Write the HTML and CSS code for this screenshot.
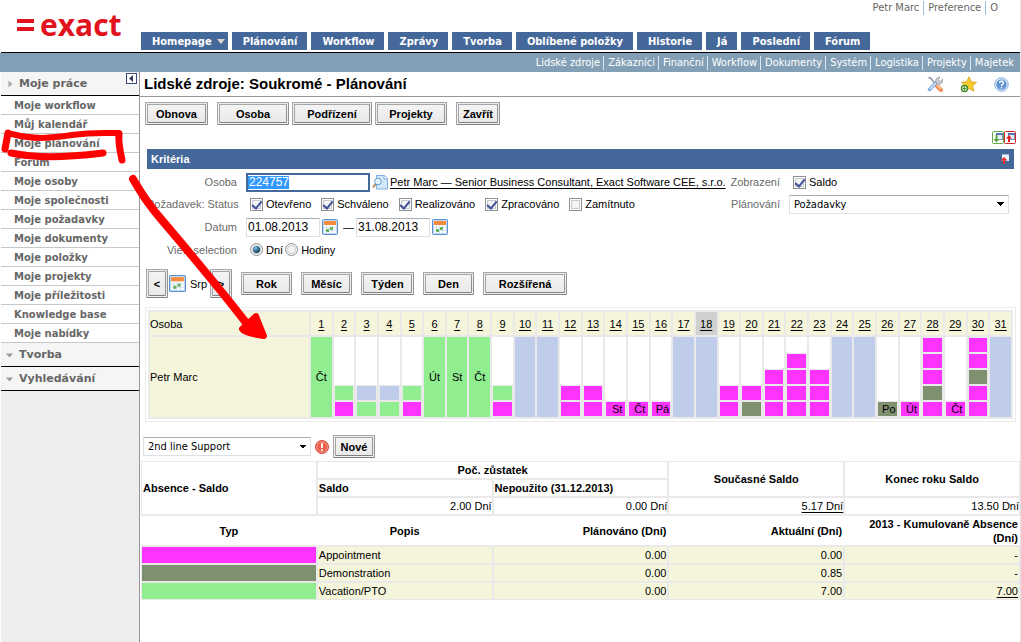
FILE: index.html
```
<!DOCTYPE html>
<html lang="cs">
<head>
<meta charset="utf-8">
<title>Lidské zdroje: Soukromé - Plánování</title>
<link rel="stylesheet" href="styles.css">
</head>
<body>
<svg class="defs" width="0" height="0" aria-hidden="true">
  <symbol id="cal" viewBox="0 0 16 16"><rect x=".5" y=".5" width="15" height="15" rx="1" fill="#c4daf4" stroke="#5b8fd0"/><rect x="2" y="2" width="12" height="12" fill="#fff"/><rect x="2" y="2" width="12" height="4" fill="#f58a3c"/><path d="M2 8.500h12M2 11.500h12M4.500 6v8M7.500 6v8M10.500 6v8" stroke="#d5e2f2"/><rect x="4" y="10" width="3" height="3" fill="#6ab460"/><rect x="8" y="8" width="3" height="3" fill="#6ab460"/></symbol>
  <symbol id="panel" viewBox="0 0 7 7"><rect x=".5" y=".5" width="6" height="6" fill="#e8f1fb" stroke="#7793c0"/><path d="M0 1h7" stroke="#5876b0" stroke-width="2"/></symbol>
</svg>

<header class="top">
  <a class="logo" href="#"><svg width="17" height="12" viewBox="0 0 17 12" aria-hidden="true"><path d="M0 0h17v4H0zM0 8h17v4H0z" fill="#e1141d"/></svg><span>exact</span></a>
  <div class="top-right">
    <nav class="user"><a href="#">Petr Marc</a><a href="#">Preference</a><a href="#">O</a></nav>
    <nav class="tabs">
      <a class="home" href="#">Homepage<svg width="8" height="5" viewBox="0 0 8 5" aria-hidden="true"><path d="M0 0h8L4 5z" fill="#ddd6cc"/></svg></a><a href="#">Plánování</a><a href="#">Workflow</a><a href="#">Zprávy</a><a href="#">Tvorba</a><a href="#">Oblíbené položky</a><a href="#">Historie</a><a href="#">Já</a><a href="#">Poslední</a><a href="#">Fórum</a>
    </nav>
  </div>
</header>
<nav class="sub"><a href="#">Lidské zdroje</a><a href="#">Zákazníci</a><a href="#">Finanční</a><a href="#">Workflow</a><a href="#">Dokumenty</a><a href="#">Systém</a><a href="#">Logistika</a><a href="#">Projekty</a><a href="#">Majetek</a></nav>

<div class="layout">
  <aside class="side">
    <h2><svg width="5" height="8" viewBox="0 0 5 8" aria-hidden="true"><path d="M.5.5v7L4.500 4z" fill="#aaa"/></svg>Moje práce
      <button class="collapse" aria-label="Skrýt menu"><svg width="11" height="11" viewBox="0 0 11 11"><rect x=".5" y=".5" width="10" height="10" fill="#fff" stroke="#3c4a80"/><path d="M7 2v7L3 5.500z" fill="#333b60"/></svg></button></h2>
    <ul>
      <li><a href="#">Moje workflow</a></li><li><a href="#">Můj kalendář</a></li><li><a href="#">Moje plánování</a></li><li><a href="#">Fórum</a></li><li><a href="#">Moje osoby</a></li><li><a href="#">Moje společnosti</a></li><li><a href="#">Moje požadavky</a></li><li><a href="#">Moje dokumenty</a></li><li><a href="#">Moje položky</a></li><li><a href="#">Moje projekty</a></li><li><a href="#">Moje příležitosti</a></li><li><a href="#">Knowledge base</a></li><li><a href="#">Moje nabídky</a></li>
    </ul>
    <h2 class="closed"><svg width="8" height="5" viewBox="0 0 8 5" aria-hidden="true"><path d="M0 .5h7L3.500 4.500z" fill="#999"/></svg>Tvorba</h2>
    <h2 class="closed"><svg width="8" height="5" viewBox="0 0 8 5" aria-hidden="true"><path d="M0 .5h7L3.500 4.500z" fill="#999"/></svg>Vyhledávání</h2>
  </aside>

  <main>
    <div class="title">
      <h1>Lidské zdroje: Soukromé - Plánování</h1>
      <a href="#" aria-label="Nastavení"><svg width="16" height="16" viewBox="0 0 16 16"><path d="M1.500 1.500l2 .5 5 6" stroke="#8a97a8" stroke-width="1.500" fill="none"/><path d="M9 9l5 5" stroke="#f08c52" stroke-width="4" stroke-linecap="round"/><path d="M9.500 8.500l4.500 4.500" stroke="#ffc9a0" stroke-width="1.500"/><path d="M2.500 13.500L10 6" stroke="#85aee2" stroke-width="3.500" stroke-linecap="round"/><path d="M3 13L9 7" stroke="#cce3fa" stroke-width="1.500"/><path d="M9 6.500a4 4 0 0 1 4-5.500l-1.500 2.500 1 1.500 1.500.5L15.500 3a4 4 0 0 1-5.500 5z" fill="#c9ced3" stroke="#8c949c" stroke-width=".7"/></svg></a>
      <a href="#" aria-label="Přidat k oblíbeným"><svg width="17" height="17" viewBox="0 0 17 17"><path d="M9 .8l2.300 5 5.200.5-3.900 3.600 1.200 5.400L9 12.500l-4.800 2.800 1.200-5.400L1.500 6.300l5.200-.5z" fill="#f8cc2c" stroke="#d99d18" stroke-width=".8"/><circle cx="4.500" cy="12.500" r="3" fill="#fff" stroke="#3f8a25" stroke-width="1.400"/><path d="M2.700 12.500h3.600M4.500 10.700v3.600" stroke="#3f8a25" stroke-width="1.200"/></svg></a>
      <a href="#" aria-label="Nápověda"><svg width="15" height="15" viewBox="0 0 15 15"><circle cx="7.500" cy="7.500" r="6.800" fill="#e3eefb" stroke="#86aede"/><circle cx="7.500" cy="7.500" r="5.200" fill="#5f93d4"/><path d="M5.600 6a1.900 1.900 0 1 1 2.700 1.700c-.6.3-.8.6-.8 1.200M7.500 10v1.500" fill="none" stroke="#fff" stroke-width="1.400"/></svg></a>
    </div>

    <div class="actions"><button class="btn w63">Obnova</button><button class="btn w72 gap-l">Osoba</button><button class="btn w80">Podřízení</button><button class="btn w72">Projekty</button><button class="btn gap-l">Zavřít</button></div>

    <div class="expand">
      <button aria-label="Rozbalit vše"><svg width="12" height="13" viewBox="0 0 12 13"><rect x=".5" y=".5" width="11" height="12" rx="1" fill="#fff" stroke="#62a848"/><use href="#panel" x="4" y="2" width="7" height="7"/><path d="M3.500 4h2v4h2l-3 3.500-3-3.500h2z" fill="#56a33c"/></svg></button><button aria-label="Sbalit vše"><svg width="12" height="13" viewBox="0 0 12 13"><rect x=".5" y=".5" width="11" height="12" rx="1" fill="#fff" stroke="#d42027"/><use href="#panel" x="4" y="2" width="7" height="7"/><path d="M4 11V7.500H2L5 4l3 3.500H6V11z" fill="#dc1f26"/></svg></button>
    </div>

    <form class="criteria">
      <h2>Kritéria<svg width="9" height="10" viewBox="0 0 9 10" aria-hidden="true"><path d="M2 0h7v7H2z" fill="#e8f1fb"/><path d="M2 .5h7" stroke="#9db8e0"/><path d="M3 10V6.500H.5L4 3l3.500 3.500H5V10z" fill="#e8302a"/></svg></h2>
      <div class="fields">
        <label class="lab" for="osoba">Osoba</label>
        <div class="field"><input class="txt person" id="osoba" value="224757"><svg class="find" width="16" height="16" viewBox="0 0 16 16" aria-hidden="true"><path d="M4.500 1.500h8l3 2.500v11h-11z" fill="#d3e8fa" stroke="#7fb0dd"/><path d="M12 1.500V5h3.500" fill="#fff" stroke="#7fb0dd"/><circle cx="6" cy="7.500" r="3.300" fill="#e9f5fe" stroke="#5f9bd0"/><path d="M3.500 10L1 13.500" stroke="#b7855a" stroke-width="2"/></svg><a class="link" href="#">Petr Marc — Senior Business Consultant, Exact Software CEE, s.r.o.</a></div>
        <span class="lab">Zobrazení</span>
        <div class="field right"><label class="opt"><input type="checkbox" checked>Saldo</label></div>

        <span class="lab">Požadavek: Status</span>
        <div class="field opts"><label class="opt"><input type="checkbox" checked>Otevřeno</label><label class="opt"><input type="checkbox" checked>Schváleno</label><label class="opt"><input type="checkbox" checked>Realizováno</label><label class="opt"><input type="checkbox" checked>Zpracováno</label><label class="opt"><input type="checkbox">Zamítnuto</label></div>
        <label class="lab" for="plan">Plánování</label>
        <div class="field"><select class="sel" id="plan"><option>Požadavky</option></select></div>

        <label class="lab" for="od">Datum</label>
        <div class="field wide"><input class="txt date" id="od" value="01.08.2013"><svg class="ico" width="16" height="16"><use href="#cal"/></svg><span class="dash">—</span><input class="txt date" aria-label="Datum do" value="31.08.2013"><svg class="ico" width="16" height="16"><use href="#cal"/></svg></div>

        <span class="lab">View selection</span>
        <div class="field wide radios"><label class="opt"><input type="radio" name="view" checked>Dní</label><label class="opt"><input type="radio" name="view">Hodiny</label></div>
      </div>
    </form>

    <div class="period"><button class="btn step">&lt;</button><svg class="ico" width="17" height="17"><use href="#cal"/></svg><span class="month">Srp</span><button class="btn step">&gt;</button>
      <div class="ranges"><button class="btn w51">Rok</button><button class="btn w51">Měsíc</button><button class="btn w53">Týden</button><button class="btn w51">Den</button><button class="btn w84">Rozšířená</button></div></div>

    <div class="cal-box">
      <table class="cal">
        <thead><tr id="days"><th class="name">Osoba</th></tr></thead>
        <tbody><tr id="load"><td class="name">Petr Marc</td></tr></tbody>
      </table>
    </div>

    <div class="new"><select class="sel" aria-label="Typ požadavku"><option>2nd line Support</option></select><svg width="14" height="14" viewBox="0 0 14 14" aria-hidden="true"><circle cx="7" cy="7" r="6.500" fill="#e8604c" stroke="#d4503e"/><circle cx="7" cy="7" r="5.300" fill="none" stroke="#f6a696" stroke-width=".8"/><path d="M7 3v5M7 9.300v1.800" stroke="#fff" stroke-width="1.800"/></svg><button class="btn">Nové</button></div>

    <div class="balance">
    <table class="saldo">
      <tbody>
        <tr><th rowspan="3" class="l">Absence - Saldo</th><th colspan="2">Poč. zůstatek</th><th rowspan="2">Současné Saldo</th><th rowspan="2">Konec roku Saldo</th></tr>
        <tr><th class="l">Saldo</th><th class="l">Nepoužito (31.12.2013)</th></tr>
        <tr><td class="r">2.00 Dní</td><td class="r">0.00 Dní</td><td class="r"><a class="link" href="#">5.17 Dní</a></td><td class="r">13.50 Dní</td></tr>
        <tr class="heads"><th>Typ</th><th>Popis</th><th class="r">Plánováno (Dní)</th><th class="r">Aktuální (Dní)</th><th class="r">2013 - Kumulovaně Absence (Dní)</th></tr>
        <tr class="row"><td class="m"></td><td>Appointment</td><td class="r">0.00</td><td class="r">0.00</td><td class="r">-</td></tr>
        <tr class="row"><td class="o"></td><td>Demonstration</td><td class="r">0.00</td><td class="r">0.85</td><td class="r">-</td></tr>
        <tr class="row"><td class="g"></td><td>Vacation/PTO</td><td class="r">0.00</td><td class="r">7.00</td><td class="r"><a class="link" href="#">7.00</a></td></tr>
      </tbody>
    </table>
    </div>
  </main>
</div>

<svg class="marks" width="280" height="350" viewBox="0 0 280 350" fill="none" stroke="#f00" stroke-linecap="round" stroke-linejoin="round" aria-hidden="true">
  <path d="M8 133l-3 16" stroke-width="7"/><path d="M12 134c22 6 40 4 60 1s34-2 47-2" stroke-width="6"/><path d="M119 134c-1 8 1 17 3 26" stroke-width="7"/><path d="M11 153c24 5 50 5 92 0" stroke-width="7"/>
  <path d="M133 179c9 15 14 24 28 40 28 33 56 66 86 105" stroke-width="8"/><path d="M256 316l-14 13c2 4 14 6 22 7z" stroke-width="6" fill="#f00"/>
</svg>
<script src="calendar.js"></script>
</body>
</html>
```

FILE: styles.css
```
* { box-sizing: border-box; }
body { margin: 0; padding-left: 1px; min-height: 100vh; display: flex; flex-direction: column; position: relative; background: #fff; border-right: 1px solid #e4e2e6; font: 11px/14px "Liberation Sans", Arial, sans-serif; color: #000; }
h1, h2, ul { margin: 0; padding: 0; list-style: none; }
a { color: inherit; text-decoration: none; }
button, input, select { font: inherit; color: inherit; margin: 0; }
svg { display: block; flex: none; }
.defs { position: absolute; }

.top { display: flex; height: 53px; border-bottom: 1px solid #000; }
.logo { flex: 0 0 139px; display: flex; align-items: center; gap: 6px; padding: 0 0 3px 16px; color: #e1141d; font: bold 30px/40px "Open Sans", sans-serif; }
.top-right { flex: 1; display: flex; flex-direction: column; justify-content: space-between; padding: 1px 0 2px; }
.user, .sub { display: flex; justify-content: flex-end; font: 11px/14px "DejaVu Sans Condensed", Tahoma, sans-serif; }
.user { color: #666; padding-right: 22px; }
.user a + a, .sub a + a { padding-left: 4px; margin-left: 4px; border-left: 1px solid #8fc0e8; }
.tabs { display: flex; gap: 4px; padding-left: 1px; }
.tabs a { display: flex; align-items: center; height: 18px; padding: 1px 10px 0 11px; background: #45689a; color: #fff; font: bold 11px/17px "DejaVu Sans Condensed", Tahoma, sans-serif; white-space: nowrap; }
.tabs .home { gap: 5px; padding-right: 3px; }
.sub { align-items: center; height: 19px; margin-left: -1px; padding-right: 6px; background: #839fb6; color: #fff; }
.sub a + a { margin-left: 3px; border-color: #d9e8f5; }

.layout { flex: 1; display: flex; }
.side { flex: 0 0 139px; background: #ededed; border-right: 1px solid #99959a; color: #666; font-family: "DejaVu Sans", Verdana, sans-serif; }
.side h2 { display: flex; align-items: center; gap: 6px; height: 24px; padding: 1px 0 0 7px; background: #f5f5f5; border-bottom: 1px solid #000; font-size: 11px; }
.side h2.closed { gap: 5px; padding-left: 5px; }
.collapse { margin-left: auto; margin-right: 2px; align-self: flex-start; padding: 0; border: 0; background: none; }
.side li { height: 19px; padding-left: 13px; background: #fff; border-bottom: 1px solid #c8c8c8; font: bold 10px/20px "DejaVu Sans", Verdana, sans-serif; white-space: nowrap; }

main { flex: 1; min-width: 0; }
.title { display: flex; align-items: center; gap: 17px; height: 25px; padding: 0 11px 0 4px; border-bottom: 1px solid #9c969c; }
.title h1 { margin-right: auto; font-size: 15px; line-height: 20px; }
.btn { min-width: 42px; height: 23px; padding: 0 4px; border: 3px double #a6a6a6; border-bottom-color: #808080; border-right-color: #939393; background: linear-gradient(#f4f4f4, #e9e9e9); font-weight: bold; line-height: 14px; white-space: nowrap; }
.w51 { min-width: 51px; }
.w53 { min-width: 53px; }
.w63 { min-width: 63px; }
.w72 { min-width: 72px; }
.w80 { min-width: 80px; }
.w84 { min-width: 84px; }
.actions { display: flex; gap: 3px; padding: 5px 5px 6px; }
.actions .gap-l { margin-left: 6px; }
.expand { display: flex; justify-content: flex-end; padding: 0 4px 5px; }
.expand button { padding: 0; border: 0; background: none; }

.criteria { margin: 0 6px 0 7px; }
.criteria h2 { display: flex; align-items: center; justify-content: space-between; height: 20px; padding: 0 5px 0 4px; background: #45689a; color: #fff; font-size: 11px; }
.fields { display: grid; grid-template: 22px 22px 24px 21px / 90px minmax(0, 1fr) auto 220px; column-gap: 9px; align-items: center; padding: 2px 5px 0 0; }
.lab { text-align: right; color: #6a6a6a; white-space: nowrap; }
.field { display: flex; align-items: center; white-space: nowrap; }
.field.wide { grid-column: 2 / -1; }
.txt { height: 19px; padding: 0 1px; border: 1px solid #dde0e6; border-top-color: #a9adb3; font-size: 12px; }
.person { width: 124px; border: 2px solid #45689a; color: #fff; background: linear-gradient(#39f, #39f) 0 center / 41px 13px no-repeat #fff; }
.date { width: 74px; }
.find { margin: 0 2px; }
.ico { margin: 0 3px 0 2px; }
.dash { margin: 0 2px; }
.link { text-decoration: underline; text-underline-offset: 2px; }
.opt { display: flex; align-items: center; gap: 3px; }
.opts { gap: 10px; padding-left: 4px; }
.radios { gap: 2px; padding-left: 4px; }
.right { padding-left: 4px; }
.opt input { appearance: none; width: 13px; height: 13px; border: 1px solid #8e8f8f; background: #f4f4f4; box-shadow: inset 0 0 0 1px #fff, inset 0 0 0 2px #c5cad0; display: grid; place-items: center; }
.opt input[type=checkbox]:checked::after { content: ""; width: 4px; height: 8px; margin-bottom: 2px; border: solid #41519a; border-width: 0 2px 2px 0; transform: rotate(40deg); }
.opt input[type=radio] { border-radius: 50%; }
.opt input[type=radio]:checked::after { content: ""; width: 7px; height: 7px; border-radius: 50%; background: radial-gradient(circle at 35% 30%, #7cc4e8, #11405e 70%); }
.sel { appearance: none; width: 100%; height: 19px; padding: 0 4px; border: 1px solid #dde0e6; border-top-color: #a9adb3; border-radius: 1px; background: linear-gradient(to bottom right, #000 50%, transparent 50%) right 3px center / 4px 4px no-repeat, linear-gradient(to bottom left, #000 50%, transparent 50%) right 7px center / 4px 4px no-repeat, #fff; font: 11px/15px "DejaVu Sans Condensed", Tahoma, sans-serif; }

.period { display: flex; align-items: center; padding: 9px 6px; }
.step { width: 22px; min-width: 22px; height: 29px; padding: 0; }
.month { width: 20px; }
.period .ico { margin: 0 4px 0 1px; }
.ranges { display: flex; gap: 9px; margin-left: 9px; }

.cal-box { margin: 0 4px 0 5px; padding: 2px; border: 1px solid #ebebeb; }
.cal { width: 100%; border: 1px solid #ebebeb; }
.cal, .saldo { table-layout: fixed; border-spacing: 0; }
.cal th, .cal td { padding: 0; border: 1px solid #e9e9e9; text-align: center; font-weight: normal; }
.cal th { height: 25px; background: #f5f5dc; }
.cal td { height: 82px; }
.cal .name { width: 161px; background: #f5f5dc; text-align: left; }
.cal .today { background: #d0d0d0; }
.cal .off { background: #bfccec; }
.cal .full { background: #90ee90; }
.stack { display: flex; flex-direction: column; justify-content: flex-end; height: 80px; }
.stack span { height: 16px; padding-left: 3px; border: 1px solid #e9e9e9; line-height: 14px; overflow: hidden; }
.stack .m { background: #f3f; }
.stack .o { background: #7f9070; }
.stack .g { background: #90ee90; }
.stack .b { background: #bfccec; }

.new { display: flex; align-items: center; gap: 4px; padding: 13px 3px 3px; }
.new .sel { width: 168px; }
.balance { padding-left: 1px; }
.saldo { width: 100%; }
.saldo th, .saldo td { height: 18px; padding: 0 1px; border: 1px solid #e9e9e9; }
.saldo .l { text-align: left; }
.saldo .r { text-align: right; }
.saldo td.r { padding-right: 0; }
.saldo .heads th { height: 31px; border-left-color: #fff; border-right-color: #fff; }
.saldo .row td { background-color: #f5f5dc; padding: 0 1px; }
.saldo .row .m { background-color: #f3f; }
.saldo .row .o { background-color: #7f9070; }
.saldo .row .g { background-color: #90ee90; }

.marks { position: absolute; left: 0; top: 0; pointer-events: none; }
```

FILE: calendar.js
```
// One entry per day: "off", "full:label", or blocks from top to bottom (m, o, g, b) with an optional label.
const plan = ["full:Čt", "gm", "bg", "bg", "gm", "full:Út", "full:St", "full:Čt", "gm", "off", "off", "mm", "mm", "m:St", "m:Čt", "m:Pá", "off", "off", "mm", "mo", "mmm", "mmmm", "mmm", "off", "off", "o:Po", "m:Út", "mmmom", "m:Čt", "mmomm", "off"];
const days = document.getElementById("days");
const load = document.getElementById("load");
plan.forEach((entry, i) => {
  const th = document.createElement("th");
  if (i === 17) th.className = "today";
  th.innerHTML = `<a class="link" href="#">${i + 1}</a>`;
  days.append(th);
  const td = document.createElement("td");
  const [kind, label = ""] = entry.split(":");
  if (kind === "off" || kind === "full") {
    td.className = kind;
    td.textContent = label;
  } else {
    td.innerHTML = `<div class="stack">${[...kind].map(k => `<span class="${k}">${label}</span>`).join("")}</div>`;
  }
  load.append(td);
});
```
